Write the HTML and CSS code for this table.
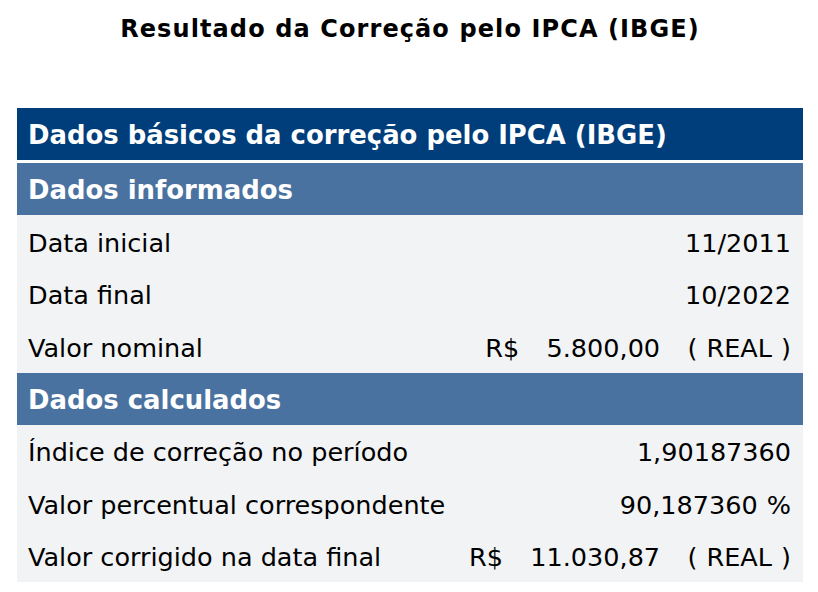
FILE: index.html
```html
<!DOCTYPE html>
<html lang="pt-BR">
<head>
<meta charset="utf-8">
<title>Resultado da Correção pelo IPCA (IBGE)</title>
<link rel="stylesheet" href="styles.css">
</head>
<body>
<div class="page">
  <h1 class="title">Resultado da Correção pelo IPCA (IBGE)</h1>
  <div class="panel">
    <div class="row head">Dados básicos da correção pelo IPCA (IBGE)</div>
    <div class="row sub">Dados informados</div>
    <div class="row item"><span class="label">Data inicial</span><span class="value">11/2011</span></div>
    <div class="row item"><span class="label">Data final</span><span class="value">10/2022</span></div>
    <div class="row item"><span class="label">Valor nominal</span><span class="value">R$   5.800,00   ( REAL )</span></div>
    <div class="row sub">Dados calculados</div>
    <div class="row item"><span class="label">Índice de correção no período</span><span class="value">1,90187360</span></div>
    <div class="row item"><span class="label">Valor percentual correspondente</span><span class="value">90,187360 %</span></div>
    <div class="row item"><span class="label">Valor corrigido na data final</span><span class="value">R$   11.030,87   ( REAL )</span></div>
  </div>
</div>
</body>
</html>
```

FILE: styles.css
```css
html, body {
  margin: 0;
  padding: 0;
  background: #ffffff;
}
.page {
  padding: 0 15px 0 17px;
  font-family: "DejaVu Sans", Verdana, sans-serif;
  color: #000;
}
.title {
  margin: 0;
  padding-top: 14px;
  height: 108px;
  box-sizing: border-box;
  text-align: center;
  font-size: 24px;
  letter-spacing: 1.1px;
  font-weight: bold;
  line-height: 30px;
}
.panel {
  display: flex;
  flex-direction: column;
}
.row {
  display: flex;
  align-items: center;
  justify-content: space-between;
  height: 52px;
  padding: 2px 12px 0 11px;
  box-sizing: border-box;
  font-size: 25.5px;
}
.head {
  background: #003d7b;
  color: #fff;
  font-weight: bold;
  font-size: 25.9px;
  margin-bottom: 3px;
}
.sub {
  background: #4a72a0;
  color: #fff;
  font-weight: bold;
  font-size: 25.9px;
}
.item {
  background: #f2f3f5;
  height: 52.5px;
  padding-top: 3px;
}
.value {
  white-space: pre;
  text-align: right;
  word-spacing: 1px;
}
```
